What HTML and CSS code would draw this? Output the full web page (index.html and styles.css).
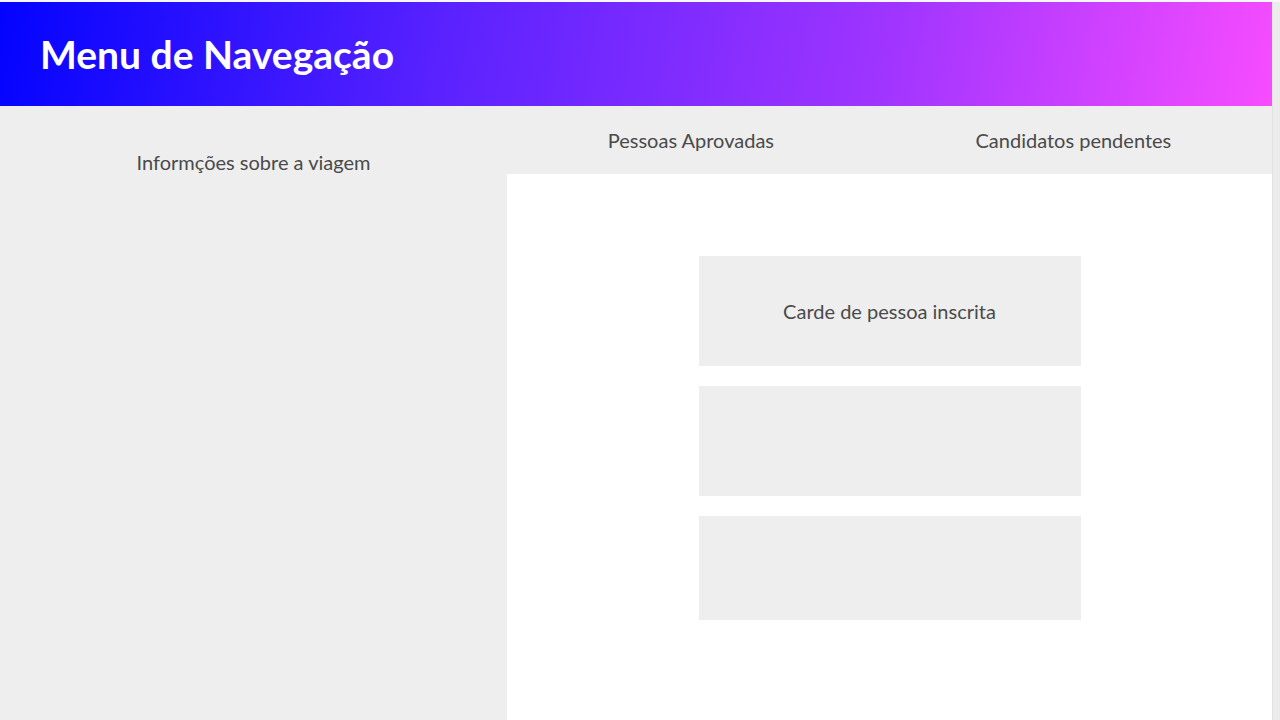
FILE: index.html
```html
<!DOCTYPE html>
<html lang="pt">
<head>
<meta charset="utf-8">
<title>Menu de Navegação</title>
<link rel="stylesheet" href="styles.css">
</head>
<body>
<div class="page">
  <div class="main">
    <header class="topbar">
      <h1 class="title">Menu de Navegação</h1>
    </header>
    <div class="content">
      <aside class="sidebar">
        <p class="side-link">Informções sobre a viagem</p>
      </aside>
      <section class="panel">
        <nav class="tabs">
          <span class="tab">Pessoas Aprovadas</span>
          <span class="tab">Candidatos pendentes</span>
        </nav>
        <div class="cards">
          <div class="card">Carde de pessoa inscrita</div>
          <div class="card"></div>
          <div class="card card-short"></div>
        </div>
      </section>
    </div>
  </div>
  <div class="rail"></div>
</div>
</body>
</html>
```

FILE: styles.css
```css
* { box-sizing: border-box; }
html, body { margin: 0; padding: 0; }
body {
  font-family: Lato, "Open Sans", sans-serif;
  background: #ffffff;
  color: #4a4a4a;
}
.page {
  display: flex;
  height: 720px;
  overflow: hidden;
  padding-top: 2px;
  background: #f7f7fb;
}
.main {
  width: 1272px;
  display: flex;
  flex-direction: column;
}
.rail {
  width: 8px;
  background: #ececec;
  border-left: 1px solid #e2e2e2;
}
.topbar {
  height: 104px;
  display: flex;
  align-items: center;
  padding-left: 40px;
  background: linear-gradient(100deg, #0303ff 0%, #5a22ff 35%, #a135ff 70%, #f74cff 100%);
}
.title {
  margin: 0;
  color: #ffffff;
  font-weight: 700;
  font-size: 39px;
}
.content {
  flex: 1;
  display: flex;
}
.sidebar {
  width: 507px;
  background: #eeeeee;
  text-align: center;
  padding-top: 43px;
}
.side-link {
  margin: 0;
  font-size: 20px;
  line-height: 26px;
}
.panel {
  flex: 1;
  background: #ffffff;
  display: flex;
  flex-direction: column;
}
.tabs {
  height: 68px;
  background: #eeeeee;
  display: flex;
  align-items: center;
  justify-content: space-around;
}
.tab {
  font-size: 20px;
}
.cards {
  display: flex;
  flex-direction: column;
  align-items: center;
  gap: 20px;
  padding-top: 82px;
}
.card {
  width: 382px;
  height: 110px;
  background: #eeeeee;
  display: flex;
  align-items: center;
  justify-content: center;
  font-size: 20px;
}
.card-short { height: 104px; }
```
